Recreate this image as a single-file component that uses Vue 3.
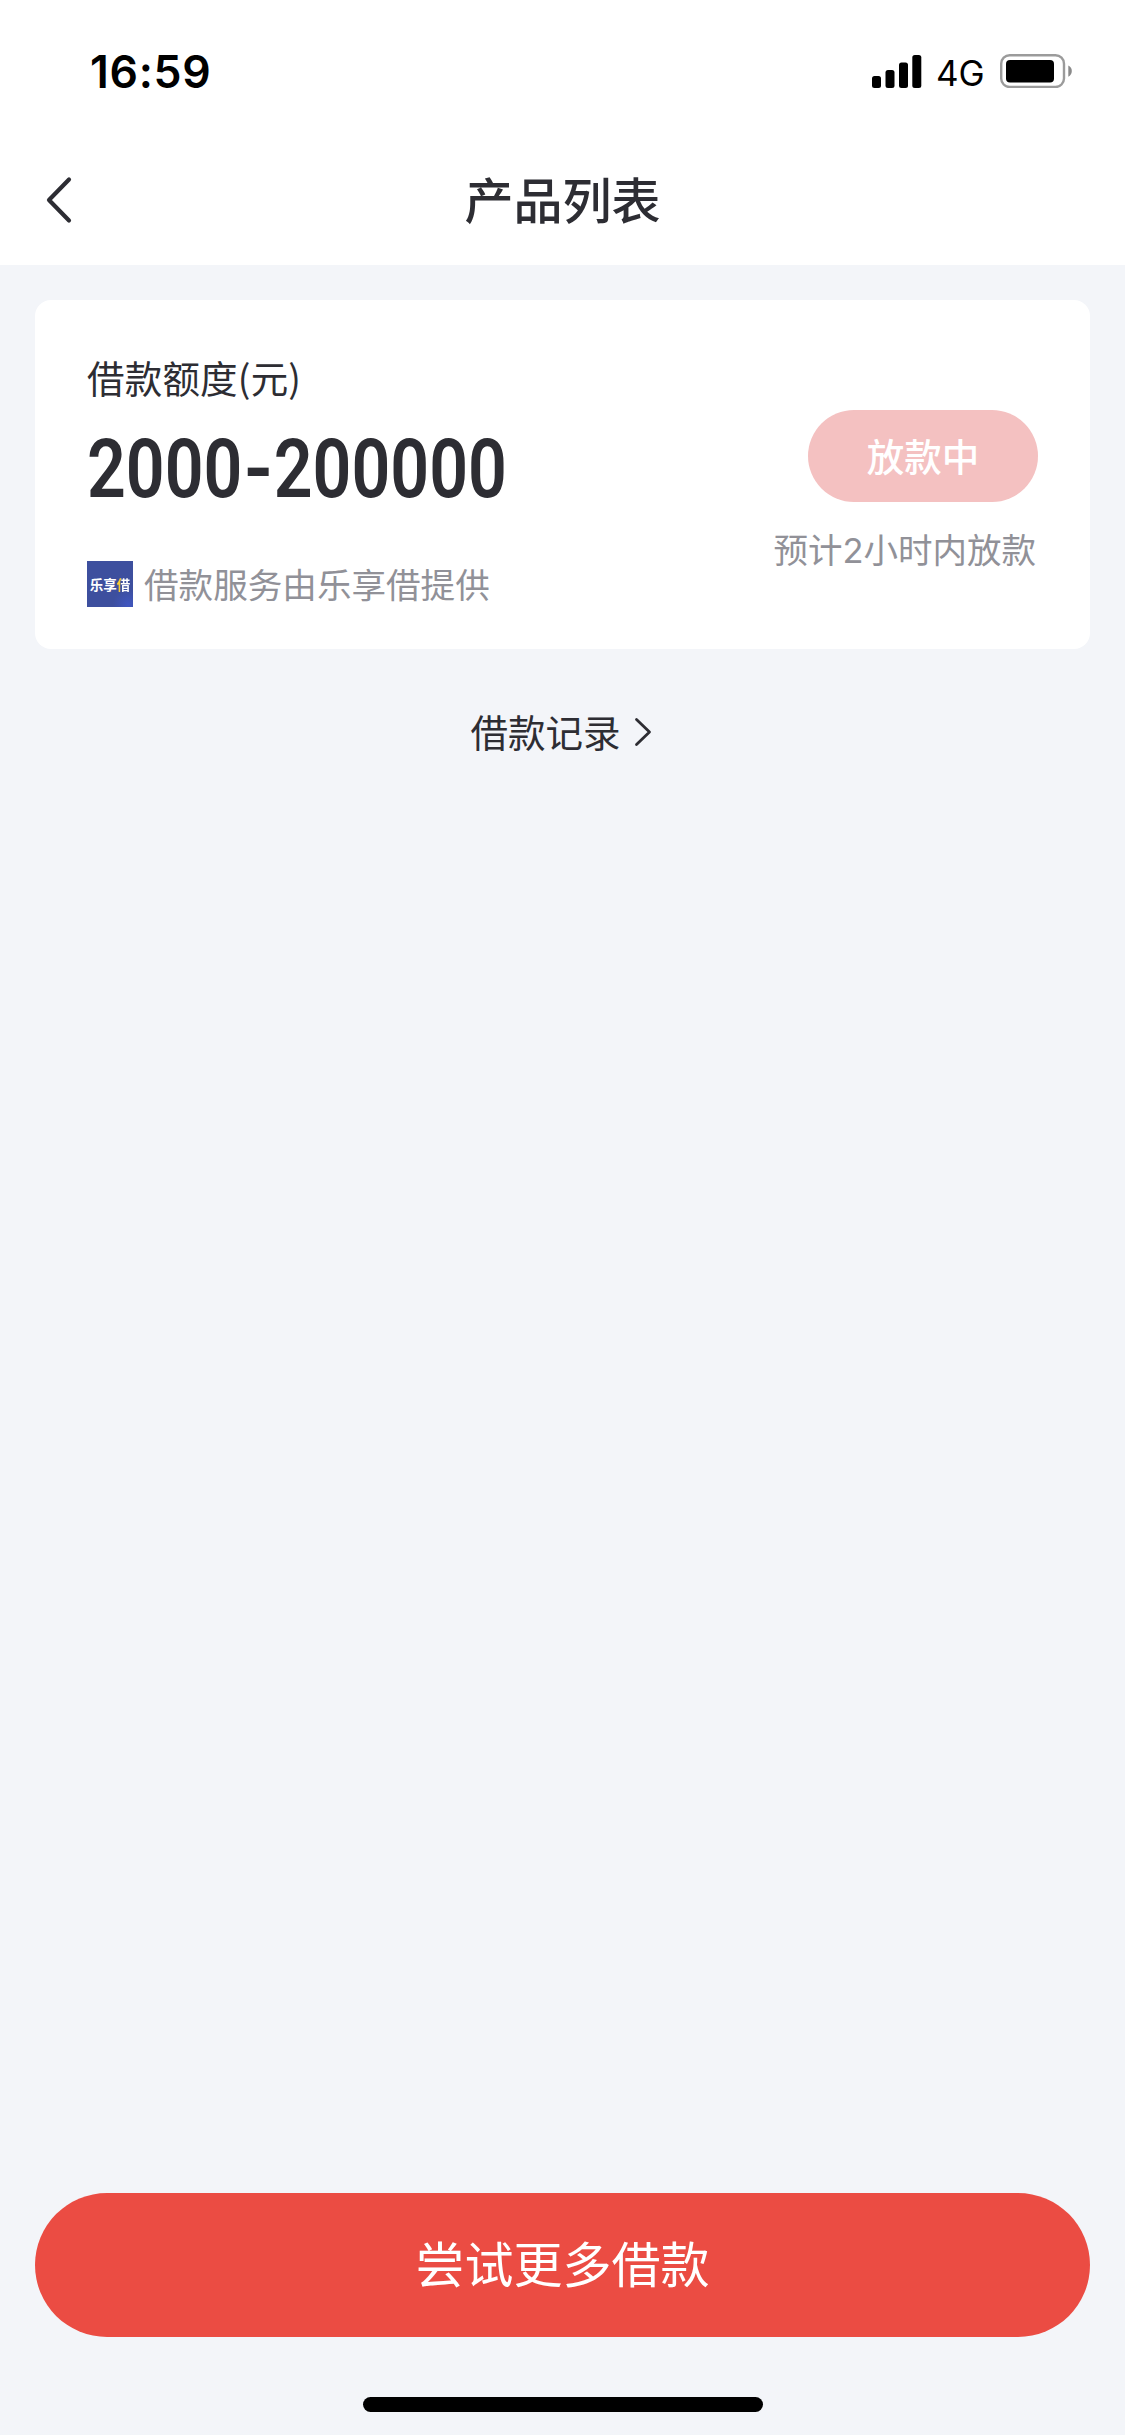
<script setup>
import { ref } from 'vue'

const time = ref('16:59')
const product = ref({
  label: '借款额度(元)',
  min: '2000',
  max: '200000',
  provider: '借款服务由乐享借提供',
  status: '放款中',
  hint: '预计2小时内放款',
})
</script>

<template>
  <div class="page">
    <header class="top">
      <div class="status-bar">
        <span class="time">{{ time }}</span>
        <div class="indicators">
          <svg class="signal" width="50" height="34" viewBox="0 0 50 34">
            <rect x="0" y="21" width="9" height="12" rx="2.5" />
            <rect x="13.5" y="15" width="9" height="18" rx="2.5" />
            <rect x="27" y="7.5" width="9" height="25.5" rx="2.5" />
            <rect x="40.3" y="0" width="9" height="33" rx="2.5" />
          </svg>
          <span class="network">4G</span>
          <svg class="battery" width="73" height="34" viewBox="0 0 73 34">
            <rect x="1.2" y="1.2" width="62.8" height="31.8" rx="8.5" fill="none" stroke="#9b9b9b" stroke-width="2.4" />
            <rect x="6" y="6" width="48" height="22.5" rx="4" fill="#000" />
            <path d="M68.3 11.5C73 13.5 73 20.5 68.3 22.7Z" fill="#8a8a8a" />
          </svg>
        </div>
      </div>
      <nav class="nav-bar">
        <button class="back" aria-label="返回">
          <svg width="28" height="48" viewBox="0 0 28 48">
            <path d="M24 3.5L4 24L24 44.5" fill="none" stroke="#2d2d33" stroke-width="4.2" stroke-linecap="round" stroke-linejoin="round" />
          </svg>
        </button>
        <h1 class="title">产品列表</h1>
      </nav>
    </header>

    <main class="content">
      <section class="card">
        <div class="info">
          <p class="label">{{ product.label }}</p>
          <p class="amount">
            <span class="figures">{{ product.min }}<span class="dash">-</span>{{ product.max }}</span>
          </p>
          <div class="provider">
            <span class="logo">
              <span class="logo-text">乐享<span class="logo-accent">借</span></span>
            </span>
            <span class="provider-name">{{ product.provider }}</span>
          </div>
        </div>
        <div class="action">
          <button class="state">{{ product.status }}</button>
          <p class="hint">{{ product.hint }}</p>
        </div>
      </section>

      <a class="records">
        <span class="records-text">借款记录</span>
        <svg width="18" height="30" viewBox="0 0 18 30">
          <path d="M2.5 2.5L15.5 15L2.5 27.5" fill="none" stroke="#2d2d33" stroke-width="2.8" stroke-linecap="round" stroke-linejoin="round" />
        </svg>
      </a>
    </main>

    <footer class="bottom">
      <button class="more">尝试更多借款</button>
      <div class="home-indicator"></div>
    </footer>
  </div>
</template>

<style>
body {
  margin: 0;
  background: #f3f5f9;
}
</style>

<style scoped>
.page {
  display: flex;
  flex-direction: column;
  width: 1125px;
  height: 2435px;
  overflow: hidden;
  background: #f3f5f9;
  color: #2d2d33;
  font-family: "Noto Sans CJK SC", sans-serif;
}

p,
h1 {
  margin: 0;
  font-weight: 400;
}

button {
  box-sizing: border-box;
  padding: 0;
  border: 0;
  background: none;
  color: inherit;
  font: inherit;
}

svg {
  display: block;
}

.top {
  height: 265px;
  background: #fff;
}

.status-bar {
  display: flex;
  justify-content: space-between;
  box-sizing: border-box;
  height: 135px;
  padding: 54px 52px 0 90px;
  color: #000;
  font-family: Inter, sans-serif;
}

.time {
  height: 36px;
  font-size: 44.5px;
  font-weight: 600;
  line-height: 36px;
  letter-spacing: 0.7px;
}

.indicators {
  display: flex;
  height: 34px;
}

.signal {
  margin-top: 1px;
}

.network {
  width: 50px;
  margin: 2px 14px 0 14px;
  font-size: 35px;
  line-height: 34px;
  white-space: nowrap;
}

.nav-bar {
  display: grid;
  grid-template-columns: 200px 1fr 200px;
  align-items: center;
  height: 130px;
}

.back {
  justify-self: start;
  margin-left: 45px;
}

.title {
  padding-bottom: 4px;
  font-size: 49px;
  font-weight: 500;
  line-height: 70px;
  text-align: center;
}

.content {
  flex: 1;
  padding: 35px 35px 0;
}

.card {
  display: flex;
  justify-content: space-between;
  box-sizing: border-box;
  height: 349px;
  padding: 0 52px;
  border-radius: 16px;
  background: #fff;
}

.info {
  padding-top: 50px;
}

.label {
  height: 54px;
  font-size: 37.5px;
  line-height: 54px;
  letter-spacing: 0.2px;
}

.amount {
  height: 84px;
  margin-top: 24px;
  font-family: Roboto, sans-serif;
  font-size: 81px;
  line-height: 84px;
  white-space: nowrap;
}

.figures {
  display: inline-block;
  font-weight: 600;
  transform: scaleX(0.84);
  transform-origin: left center;
}

.dash {
  display: inline-block;
  margin: 0 4px 0 3.5px;
  transform: scaleX(1.15);
}

.provider {
  display: flex;
  align-items: center;
  height: 46px;
  margin-top: 49px;
}

.logo {
  display: flex;
  align-items: center;
  justify-content: center;
  width: 46px;
  height: 46px;
  background: radial-gradient(circle at 90% 95%, #4056c0 0, #3d4f9e 26%);
  color: #fff;
  font-size: 13.5px;
  font-weight: 700;
  line-height: 20px;
}

.logo-text {
  padding-bottom: 1px;
}

.logo-accent {
  background: linear-gradient(90deg, #f7cb32 34%, #fff 34%);
  background-clip: text;
  color: transparent;
}

.provider-name {
  margin-left: 11px;
  padding-bottom: 2px;
  color: #919198;
  font-size: 34.6px;
  line-height: 46px;
}

.action {
  display: flex;
  flex-direction: column;
  align-items: flex-end;
  padding-top: 110px;
}

.state {
  width: 230px;
  height: 92px;
  padding-bottom: 3px;
  border-radius: 46px;
  background: #f4c1c1;
  color: #fff;
  font-size: 37.5px;
  font-weight: 500;
}

.hint {
  margin: 24px 2px 0 0;
  color: #919198;
  font-family: Inter, "Noto Sans CJK SC", sans-serif;
  font-size: 34.5px;
  line-height: 50px;
}

.records {
  display: flex;
  align-items: center;
  justify-content: center;
  gap: 13px;
  height: 54px;
  margin-top: 56px;
  padding-right: 3px;
  font-size: 37.5px;
  line-height: 54px;
}

.records-text {
  padding-bottom: 2px;
}

.bottom {
  display: flex;
  flex-direction: column;
  align-items: center;
  height: 242px;
}

.more {
  width: 1055px;
  height: 144px;
  padding-bottom: 7px;
  border-radius: 72px;
  background: #eb4c43;
  color: #fff;
  font-size: 49px;
}

.home-indicator {
  width: 400px;
  height: 15px;
  margin-top: 60px;
  border-radius: 8px;
  background: #000;
}
</style>
